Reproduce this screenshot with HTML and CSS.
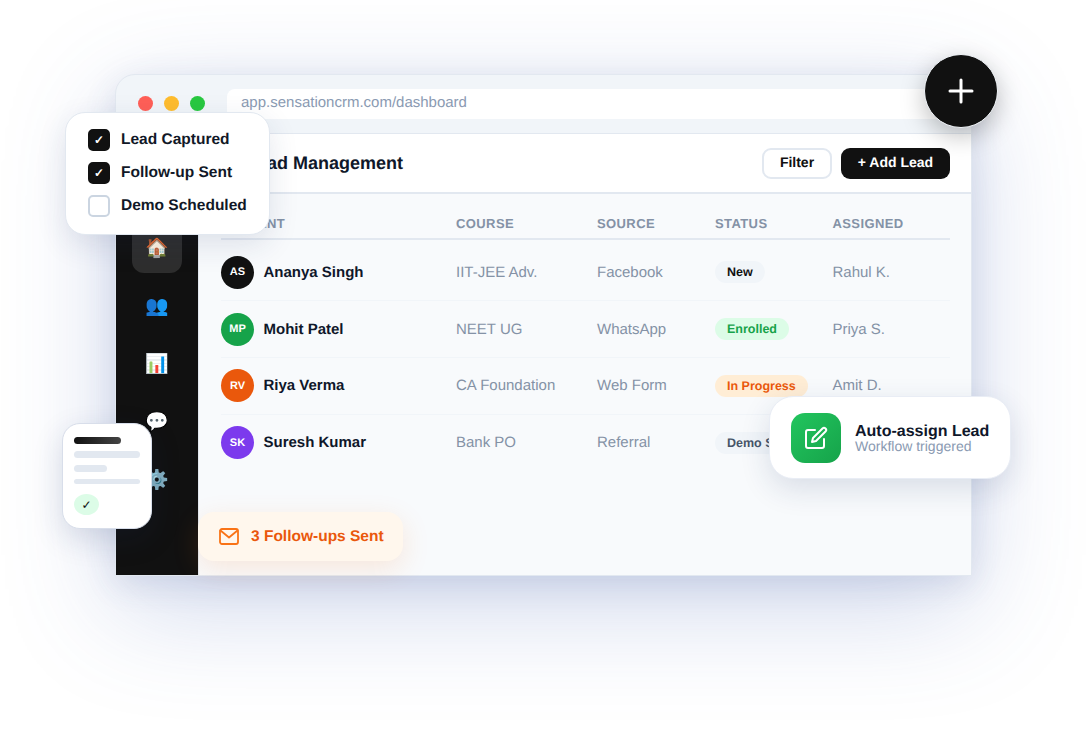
FILE: index.html
```html
<!DOCTYPE html>
<html lang="en">
<head>
<meta charset="utf-8">
<title>Sensation CRM</title>
<link rel="stylesheet" href="styles.css">
</head>
<body>
<div class="stage">
  <div class="window">
    <div class="titlebar">
      <span class="dot red"></span><span class="dot amber"></span><span class="dot green"></span>
      <div class="url">app.sensationcrm.com/dashboard</div>
    </div>
    <div class="app">
      <nav class="sidebar">
        <div class="nav-item active">🏠</div>
        <div class="nav-item">👥</div>
        <div class="nav-item">📊</div>
        <div class="nav-item">💬</div>
        <div class="nav-item">⚙️</div>
      </nav>
      <main class="main">
        <header class="topbar">
          <h1 class="title">Lead Management</h1>
          <div class="actions">
            <button class="btn btn-light">Filter</button>
            <button class="btn btn-dark">+ Add Lead</button>
          </div>
        </header>
        <section class="table">
          <div class="row head">
            <div>STUDENT</div><div>COURSE</div><div>SOURCE</div><div>STATUS</div><div>ASSIGNED</div>
          </div>
          <div class="row">
            <div class="person"><span class="avatar a-black">AS</span><span class="name">Ananya Singh</span></div>
            <div>IIT-JEE Adv.</div><div>Facebook</div>
            <div><span class="badge b-new">New</span></div><div>Rahul K.</div>
          </div>
          <div class="row">
            <div class="person"><span class="avatar a-green">MP</span><span class="name">Mohit Patel</span></div>
            <div>NEET UG</div><div>WhatsApp</div>
            <div><span class="badge b-enrolled">Enrolled</span></div><div>Priya S.</div>
          </div>
          <div class="row">
            <div class="person"><span class="avatar a-orange">RV</span><span class="name">Riya Verma</span></div>
            <div>CA Foundation</div><div>Web Form</div>
            <div><span class="badge b-progress">In Progress</span></div><div>Amit D.</div>
          </div>
          <div class="row last">
            <div class="person"><span class="avatar a-purple">SK</span><span class="name">Suresh Kumar</span></div>
            <div>Bank PO</div><div>Referral</div>
            <div><span class="badge b-demo">Demo Scheduled</span></div><div>Neha R.</div>
          </div>
        </section>
      </main>
    </div>
  </div>

  <div class="fab">
    <svg width="30" height="30" viewBox="0 0 30 30" fill="none" stroke="#fff" stroke-width="3" stroke-linecap="round"><path d="M15 4v22M4 15h22"/></svg>
  </div>

  <div class="checklist">
    <div class="check-row"><span class="box on">✓</span><span class="check-label">Lead Captured</span></div>
    <div class="check-row"><span class="box on">✓</span><span class="check-label">Follow-up Sent</span></div>
    <div class="check-row"><span class="box"></span><span class="check-label">Demo Scheduled</span></div>
  </div>

  <div class="mini">
    <div class="bar bar-dark"></div>
    <div class="bar bar-a"></div>
    <div class="bar bar-b"></div>
    <div class="bar bar-c"></div>
    <div class="mini-check">✓</div>
  </div>

  <div class="followups">
    <svg width="20" height="17" viewBox="0 0 20 17" fill="none" stroke="#f97316" stroke-width="1.8" stroke-linecap="round" stroke-linejoin="round"><rect x="1" y="1" width="18" height="15" rx="2"/><path d="M1.5 2.5L10 9.5l8.500-7"/></svg>
    <span>3 Follow-ups Sent</span>
  </div>

  <div class="auto">
    <div class="auto-icon">
      <svg width="24" height="24" viewBox="0 0 24 24" fill="none" stroke="#fff" stroke-width="2" stroke-linecap="round" stroke-linejoin="round"><path d="M11 4H4a2 2 0 0 0-2 2v14a2 2 0 0 0 2 2h14a2 2 0 0 0 2-2v-7"/><path d="M18.5 2.500a2.120 2.120 0 0 1 3 3L12 15l-4 1 1-4 9.500-9.500z"/></svg>
    </div>
    <div class="auto-text">
      <div class="auto-title">Auto-assign Lead</div>
      <div class="auto-sub">Workflow triggered</div>
    </div>
  </div>
</div>
</body>
</html>
```
FILE: styles.css
```css
* { box-sizing: border-box; }
html, body { margin: 0; background: #fff; }
body { font-family: "Liberation Sans", Arial, sans-serif; color: #0f172a; text-rendering: geometricPrecision; }
.stage { position: relative; width: 1087px; height: 732px; overflow: hidden; padding: 74px 115px 0 115px; }

.window { width: 857px; height: 502px; display: flex; flex-direction: column; background: #f1f5f9; border-radius: 20px 20px 0 0; border: 1px solid #e2e8f0; box-shadow: 0 30px 110px rgba(70, 100, 180, .26), 0 8px 32px rgba(60, 80, 140, .14); }
.titlebar { height: 58px; flex: none; display: flex; align-items: center; gap: 11px; padding: 0 0 1px 22px; }
.dot { width: 15px; height: 15px; border-radius: 50%; flex: none; }
.red { background: #ff5f57; }
.amber { background: #febc2e; }
.green { background: #28c840; }
.url { width: 735px; height: 30px; margin-left: 11px; padding-left: 14px; background: #fff; border-radius: 8px; color: #8a9ab2; font-size: 15px; line-height: 28px; }

.app { flex: 1; display: flex; min-height: 0; border-top: 1px solid #e2e8f0; }
.sidebar { width: 82px; flex: none; background: #111; display: flex; flex-direction: column; align-items: center; gap: 8px; padding-top: 89px; }
.nav-item { width: 50px; height: 50px; border-radius: 12px; display: flex; align-items: center; justify-content: center; font-size: 19px; }
.nav-item.active { background: #2e2e2e; }

.main { flex: 1; background: #f8fafc; min-width: 0; border-left: 1px solid #e2e8f0; }
.topbar { height: 60px; background: #fff; border-bottom: 2px solid #e2e8f0; display: flex; align-items: center; justify-content: space-between; padding: 0 21px 0 47px; }
.title { margin: 1px 0 0; font-size: 18px; font-weight: 700; color: #0f172a; }
.actions { display: flex; gap: 9px; }
.btn { height: 31px; border-radius: 9px; font: 700 14px "Liberation Sans", Arial, sans-serif; padding: 0 0 2px; text-rendering: geometricPrecision; }
.btn-light { width: 70px; background: #fff; color: #111; border: 2px solid #e2e8f0; }
.btn-dark { width: 109px; background: #111; color: #fff; border: 0; }

.table { padding: 20px 21px 0 22px; }
.row { display: grid; grid-template-columns: 235px 141px 118px 117.5px 1fr; align-items: center; height: 56.67px; border-bottom: 1px solid #f1f5f9; font-size: 15px; color: #8492a6; }
.row.last { border-bottom: 0; }
.row.head { height: 26px; padding-bottom: 5px; margin-bottom: 4.6px; border-bottom: 2px solid #e2e8f0; font-size: 13px; font-weight: 700; letter-spacing: .4px; }
.person { display: flex; align-items: center; gap: 9.5px; }
.avatar { width: 33px; height: 33px; border-radius: 50%; display: flex; align-items: center; justify-content: center; color: #fff; font-size: 11px; font-weight: 700; flex: none; }
.a-black { background: #111; }
.a-green { background: #16a34a; }
.a-orange { background: #ea580c; }
.a-purple { background: #7c3aed; }
.name { font-size: 15px; font-weight: 700; color: #0f172a; }
.badge { display: inline-block; height: 22px; line-height: 22px; padding: 0 12px; border-radius: 11px; font-size: 12.5px; font-weight: 700; white-space: nowrap; }
.b-new { background: #f1f5f9; color: #111; }
.b-enrolled { background: #dcfce7; color: #16a34a; }
.b-progress { background: #ffedd5; color: #ea580c; }
.b-demo { background: #f1f5f9; color: #475569; }

.fab { position: absolute; left: 924px; top: 54px; width: 74px; height: 74px; border-radius: 50%; background: #111; border: 1px solid #f1f5f9; display: flex; align-items: center; justify-content: center; box-shadow: 0 8px 24px rgba(0, 0, 0, .25); }

.checklist { position: absolute; left: 65px; top: 112px; width: 205px; height: 123px; background: #fff; border-radius: 20px; border: 1px solid #e2e8f0; box-shadow: 0 10px 30px rgba(30, 50, 100, .12); padding: 16px 0 0 22px; display: flex; flex-direction: column; gap: 11px; }
.check-row { display: flex; align-items: center; gap: 11px; height: 22px; font-size: 15.5px; font-weight: 700; color: #111827; white-space: nowrap; }
.check-label { padding-bottom: 1px; }
.box { width: 22px; height: 22px; border-radius: 5px; border: 2px solid #cbd5e1; display: flex; align-items: center; justify-content: center; font-size: 12px; color: #fff; }
.box.on { background: #111; border-color: #111; }

.mini { position: absolute; left: 62px; top: 423px; width: 90px; height: 106px; background: #fff; border-radius: 18px; border: 1px solid #d8deea; box-shadow: 0 10px 30px rgba(30, 50, 100, .15); padding: 13px 11px; }
.bar { border-radius: 4px; background: #e2e8f0; }
.bar-dark { width: 47px; height: 7px; background: linear-gradient(90deg, #111, #444); }
.bar-a { width: 66px; height: 7px; margin-top: 7px; }
.bar-b { width: 33px; height: 7px; margin-top: 7px; }
.bar-c { width: 66px; height: 5px; margin-top: 7px; }
.mini-check { width: 25px; height: 21px; margin-top: 10px; border-radius: 50%; background: #dcfce7; display: flex; align-items: center; justify-content: center; font-size: 12px; color: #111; }

.followups { position: absolute; left: 198px; top: 512px; width: 205px; height: 49px; background: #fff7ed; border-radius: 16px; box-shadow: 0 8px 28px rgba(249, 115, 22, .14); display: flex; align-items: center; gap: 12px; padding-left: 21px; font-size: 15.5px; font-weight: 700; color: #ea580c; }

.auto { position: absolute; left: 769px; top: 396px; width: 242px; height: 83px; background: #fff; border-radius: 24px; border: 1px solid #e9edf5; box-shadow: 0 10px 30px rgba(30, 50, 100, .14); display: flex; align-items: center; gap: 14px; padding-left: 21px; }
.auto-icon { width: 50px; height: 50px; border-radius: 14px; background: linear-gradient(135deg, #22c55e, #16a34a); display: flex; align-items: center; justify-content: center; flex: none; }
.auto-title { font-size: 16px; font-weight: 700; color: #0f172a; line-height: 17px; }
.auto-sub { font-size: 14px; color: #8a9ab2; line-height: 13px; }
```
